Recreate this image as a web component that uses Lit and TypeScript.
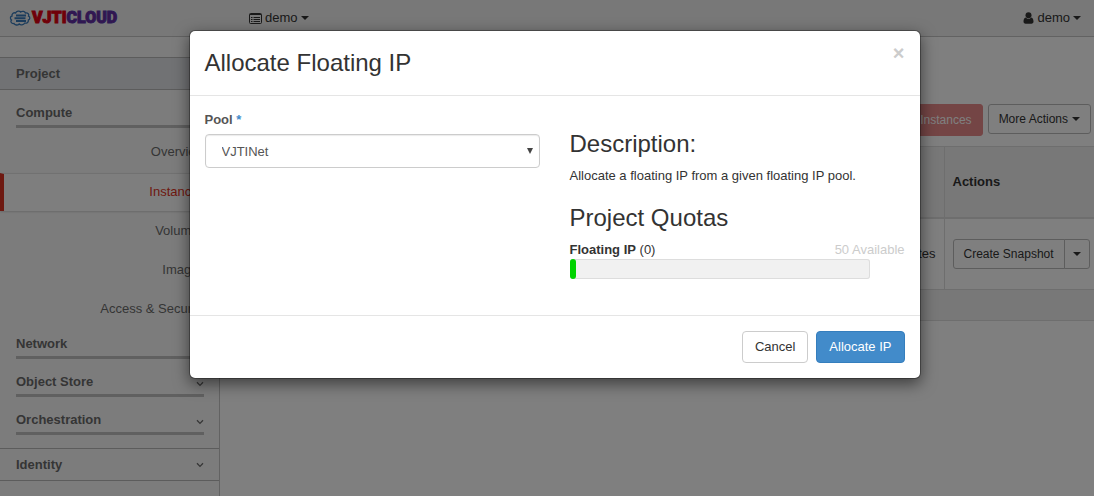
import { LitElement, html, css } from "lit";
import { customElement, property, state } from "lit/decorators.js";

interface NavGroup {
  title: string;
  items: string[];
}

const chevron = html`<svg class="chevron" viewBox="0 0 8 6" width="8" height="6" aria-hidden="true">
  <path d="M1 1.2 4 4.4 7 1.2" fill="none" stroke="currentColor" stroke-width="1.3" />
</svg>`;

const caret = html`<svg class="caret" viewBox="0 0 8 4" width="8" height="4" aria-hidden="true">
  <path d="M0 0h8L4 4z" fill="currentColor" />
</svg>`;

@customElement("dashboard-topbar")
export class DashboardTopbar extends LitElement {
  static styles = css`
    :host {
      display: block;
      background: #f1f1f1;
      border-bottom: 1px solid #c4c4c4;
    }
    .bar {
      display: flex;
      align-items: center;
      height: 36px;
      padding: 0 13px 0 9px;
    }
    .brand {
      display: flex;
      align-items: center;
      gap: 1px;
      width: 240px;
      text-decoration: none;
    }
    .word {
      font: 900 16px/20px Roboto, "Liberation Sans", sans-serif;
      color: #e00012;
      -webkit-text-stroke: 1px #e00012;
    }
    .cloud {
      color: #6a2aa0;
      -webkit-text-stroke: 1px #5a35a8;
    }
    .menu {
      display: flex;
      align-items: center;
      gap: 3px;
      padding: 0;
      border: 0;
      background: none;
      color: #333;
      font: 13px/18px "Liberation Sans", Arial, sans-serif;
    }
    .user {
      margin-left: auto;
    }
  `;

  render() {
    return html`<header class="bar">
      <a class="brand" href="#" aria-label="VJTICLOUD">
        <svg width="22" height="18" viewBox="0 0 22 18" fill="none" stroke="#3678b8" aria-hidden="true">
          <path
            stroke-width="1.3"
            d="M5 14.5C2.500 15 1 12.500 2.500 11 .8 9.800 1.200 7.300 3 7 2.500 4.500 5 3.200 6.600 4 7.500 1.800 10.500 1.700 11.600 3 13.500 1.600 16 2.500 16.400 4 18.800 3.600 20.500 5.400 19.500 7.200 21.500 8 21 10.600 19.400 11 19.600 13.500 17.500 14.600 15.800 14 14.500 16.200 11.500 16.300 10.200 15 8.500 16.600 5.800 16.200 5 14.500Z"
          />
          <path stroke-width="2" d="M7 6.500h10M5.500 9.200h11M7 12h10" />
        </svg>
        <span class="word">VJTI<span class="cloud">CLOUD</span></span>
      </a>
      <button class="menu" type="button">
        <svg width="13" height="11" viewBox="0 0 13 11" fill="none" stroke="currentColor" aria-hidden="true">
          <rect x=".5" y=".5" width="12" height="10" rx="1" />
          <path d="M1 1.500h11M2 4.500h1.500M4.500 4.500H11M2 6.500h1.500M4.500 6.500H11M2 8.500h1.500M4.500 8.500H11" />
        </svg>
        demo ${caret}
      </button>
      <button class="menu user" type="button">
        <svg width="11" height="12" viewBox="0 0 10 12" fill="currentColor" aria-hidden="true">
          <circle cx="5" cy="3.200" r="3" />
          <path d="M2.200 5.400C.6 5.800 0 7.400 0 9.600 0 11 .8 11.700 2 11.700h6c1.200 0 2-.7 2-2.100 0-2.200-.6-3.800-2.200-4.200C7 6.300 6 6.800 5 6.800s-2-.5-2.800-1.400Z" />
        </svg>
        demo ${caret}
      </button>
    </header>`;
  }
}

@customElement("dashboard-sidebar")
export class DashboardSidebar extends LitElement {
  static styles = css`
    :host {
      display: block;
      box-sizing: border-box;
      padding-top: 20px;
      background: #f9f9f9;
      border-right: 1px solid #c4c4c4;
      color: #6b6b6b;
      font: 13px/18px "Liberation Sans", Arial, sans-serif;
    }
    .panel,
    .group {
      display: flex;
      align-items: center;
      justify-content: space-between;
      color: inherit;
      font-weight: bold;
      text-decoration: none;
    }
    .panel {
      height: 31px;
      padding: 0 15px 0 16px;
      border-top: 1px solid #b8b8b8;
      border-bottom: 1px solid #b8b8b8;
    }
    .open {
      background: #e2e5e8;
    }
    .groups {
      padding-top: 14px;
    }
    .group {
      height: 21px;
      margin: 0 15px 14px 16px;
      border-bottom: 3px solid #c0c0c0;
      align-items: flex-start;
    }
    .group:last-child {
      margin-bottom: 13px;
    }
    .group .chevron {
      margin-top: 8px;
    }
    .items {
      margin: -9px 0 6px;
      padding: 0;
      list-style: none;
    }
    .item {
      display: block;
      padding: 10px 14px 11px;
      color: inherit;
      text-align: right;
      text-decoration: none;
    }
    .active {
      margin: 1px 0;
      padding: 9px 14px 10px 10px;
      background: #fdfdfd;
      border-left: 4px solid #dd3322;
      border-top: 1px solid #e2e2e2;
      box-shadow: 0 1px 2px #d0d0d0;
      color: #dd3322;
    }
  `;

  @property({ attribute: false }) groups: NavGroup[] = [];
  @property() current = "";

  render() {
    return html`<nav>
      <a class="panel open" href="#">Project ${chevron}</a>
      <div class="groups">
        ${this.groups.map(
          (g) => html`<a class="group" href="#">${g.title} ${chevron}</a>
            ${g.items.length
              ? html`<ul class="items">
                  ${g.items.map(
                    (i) => html`<li><a class="item ${i === this.current ? "active" : ""}" href="#">${i}</a></li>`
                  )}
                </ul>`
              : ""}`
        )}
      </div>
      <a class="panel" href="#">Identity ${chevron}</a>
    </nav>`;
  }
}

@customElement("instances-panel")
export class InstancesPanel extends LitElement {
  static styles = css`
    :host {
      display: block;
      padding: 67px 0 0 15px;
      background: #fff;
      color: #333;
      font: 13px/18px "Liberation Sans", Arial, sans-serif;
    }
    .actions {
      display: flex;
      justify-content: flex-end;
      align-items: flex-start;
      gap: 5px;
      padding: 0 3px 10px 0;
    }
    .btn {
      display: inline-flex;
      align-items: center;
      gap: 4px;
      box-sizing: border-box;
      height: 30px;
      padding: 0 10px;
      border: 1px solid #bbb;
      border-radius: 3px;
      background: #fff;
      color: #333;
      font: 12px/18px "Liberation Sans", Arial, sans-serif;
      white-space: nowrap;
    }
    .danger {
      height: 32px;
      border-color: #e88a8a;
      background: #e88a8a;
      color: #fff;
    }
    .split {
      display: flex;
    }
    .first {
      border-radius: 3px 0 0 3px;
    }
    .toggle {
      margin-left: -1px;
      padding: 0 8px;
      border-radius: 0 3px 3px 0;
    }
    .table {
      width: 100%;
      border-collapse: collapse;
      border-top: 1px solid #ddd;
    }
    .cell {
      box-sizing: border-box;
      height: 72px;
      padding: 0 8px;
      border-bottom: 1px solid #ddd;
      text-align: right;
    }
    .head {
      height: 71px;
      background: #f1f1f1;
      border-bottom: 2px solid #ddd;
      text-align: left;
    }
    .last {
      width: 150px;
      padding-right: 4px;
      border-left: 1px solid #ddd;
      text-align: left;
    }
    .foot {
      height: 31px;
      background: #f1f1f1;
    }
  `;

  render() {
    return html`<div class="actions">
        <button class="btn danger" type="button">Terminate Instances</button>
        <button class="btn" type="button">More Actions ${caret}</button>
      </div>
      <table class="table">
        <thead>
          <tr>
            <th class="cell head">Time since created</th>
            <th class="cell head last">Actions</th>
          </tr>
        </thead>
        <tbody>
          <tr>
            <td class="cell">0 minutes</td>
            <td class="cell last">
              <div class="split">
                <button class="btn first" type="button">Create Snapshot</button>
                <button class="btn toggle" type="button" aria-label="More">${caret}</button>
              </div>
            </td>
          </tr>
        </tbody>
        <tfoot>
          <tr>
            <td class="cell foot" colspan="2"></td>
          </tr>
        </tfoot>
      </table>`;
  }
}

@customElement("floating-ip-dialog")
export class FloatingIpDialog extends LitElement {
  static styles = css`
    :host {
      display: block;
      width: 732px;
      max-width: 100%;
      box-sizing: border-box;
      border: 1px solid rgba(0, 0, 0, 0.3);
      border-radius: 6px;
      background: #fff;
      background-clip: padding-box;
      box-shadow: 0 5px 15px rgba(0, 0, 0, 0.5);
      color: #333;
      font: 13px/18px "Liberation Sans", Arial, sans-serif;
    }
    .header {
      display: flex;
      align-items: flex-start;
      justify-content: space-between;
      padding: 15px;
      border-bottom: 1px solid #e5e5e5;
    }
    .title {
      margin: 0;
      font-size: 24px;
      font-weight: normal;
      line-height: 34px;
    }
    .close {
      padding: 0;
      border: 0;
      background: none;
      color: #ccc;
      font: bold 20px/14px "Liberation Sans", Arial, sans-serif;
    }
    .body {
      display: grid;
      grid-template-columns: 1fr 1fr;
      gap: 30px;
      padding: 15px 15px 36px;
    }
    .label {
      display: block;
      margin-bottom: 5px;
      color: #555;
      font-weight: bold;
    }
    .required {
      color: #428bca;
    }
    .field {
      display: grid;
      align-items: center;
    }
    .select {
      grid-area: 1 / 1;
      height: 34px;
      padding: 2px 16px 0;
      border: 1px solid #ccc;
      border-radius: 4px;
      appearance: none;
      background: #fff;
      box-shadow: inset 0 1px 1px rgba(0, 0, 0, 0.08);
      color: #555;
      font: inherit;
    }
    .arrow {
      grid-area: 1 / 1;
      justify-self: end;
      margin-right: 7px;
      color: #444;
      pointer-events: none;
    }
    .heading {
      margin: 20px 0 10px;
      font-size: 24px;
      font-weight: normal;
      line-height: 26px;
    }
    .text {
      margin: 0;
    }
    .quota {
      display: flex;
      justify-content: space-between;
    }
    .available {
      color: #ccc;
    }
    .meter {
      box-sizing: border-box;
      width: 300px;
      max-width: 100%;
      height: 20px;
      border-radius: 3px;
      background: #f1f1f1;
      box-shadow: inset 0 0 0 1px #ddd;
    }
    .fill {
      height: 100%;
      border-radius: 3px;
      background: #00d300;
    }
    .footer {
      display: flex;
      justify-content: flex-end;
      gap: 8px;
      padding: 15px;
      border-top: 1px solid #e5e5e5;
    }
    .btn {
      height: 32px;
      padding: 0 12px;
      border: 1px solid #ccc;
      border-radius: 4px;
      background: #fff;
      color: #333;
      font: inherit;
    }
    .primary {
      border-color: #357ebd;
      background: #428bca;
      color: #fff;
    }
  `;

  @state() private used = 2;

  render() {
    return html`<form role="dialog" aria-labelledby="title" @submit=${(e: Event) => e.preventDefault()}>
      <div class="header">
        <h3 class="title" id="title">Allocate Floating IP</h3>
        <button class="close" type="button" aria-label="Close">×</button>
      </div>
      <div class="body">
        <div>
          <label class="label" for="pool">Pool <span class="required">*</span></label>
          <div class="field">
            <select class="select" id="pool">
              <option>VJTINet</option>
            </select>
            <svg class="arrow" width="6" height="6" viewBox="0 0 6 6" aria-hidden="true">
              <path d="M0 0h6L3 6z" fill="currentColor" />
            </svg>
          </div>
        </div>
        <div>
          <h3 class="heading">Description:</h3>
          <p class="text">Allocate a floating IP from a given floating IP pool.</p>
          <h3 class="heading">Project Quotas</h3>
          <div class="quota">
            <span><strong>Floating IP</strong> (0)</span>
            <span class="available">50 Available</span>
          </div>
          <div class="meter"><div class="fill" style="width:${this.used}%"></div></div>
        </div>
      </div>
      <div class="footer">
        <button class="btn" type="button">Cancel</button>
        <button class="btn primary" type="submit">Allocate IP</button>
      </div>
    </form>`;
  }
}

@customElement("app-root")
export class AppRoot extends LitElement {
  static styles = css`
    :host {
      display: block;
      position: relative;
      height: 100vh;
      overflow: hidden;
    }
    .page {
      display: grid;
      grid-template: auto 1fr / 220px 1fr;
      height: 100%;
    }
    .top {
      grid-column: 1 / -1;
    }
    .backdrop {
      position: absolute;
      inset: 0;
      display: flex;
      justify-content: center;
      align-items: flex-start;
      padding: 30px 0 0 15px;
      background: rgba(0, 0, 0, 0.5);
    }
  `;

  private groups: NavGroup[] = [
    { title: "Compute", items: ["Overview", "Instances", "Volumes", "Images", "Access & Security"] },
    { title: "Network", items: [] },
    { title: "Object Store", items: [] },
    { title: "Orchestration", items: [] },
  ];

  render() {
    return html`<div class="page">
        <dashboard-topbar class="top"></dashboard-topbar>
        <dashboard-sidebar .groups=${this.groups} current="Instances"></dashboard-sidebar>
        <instances-panel></instances-panel>
      </div>
      <div class="backdrop"><floating-ip-dialog></floating-ip-dialog></div>`;
  }
}
